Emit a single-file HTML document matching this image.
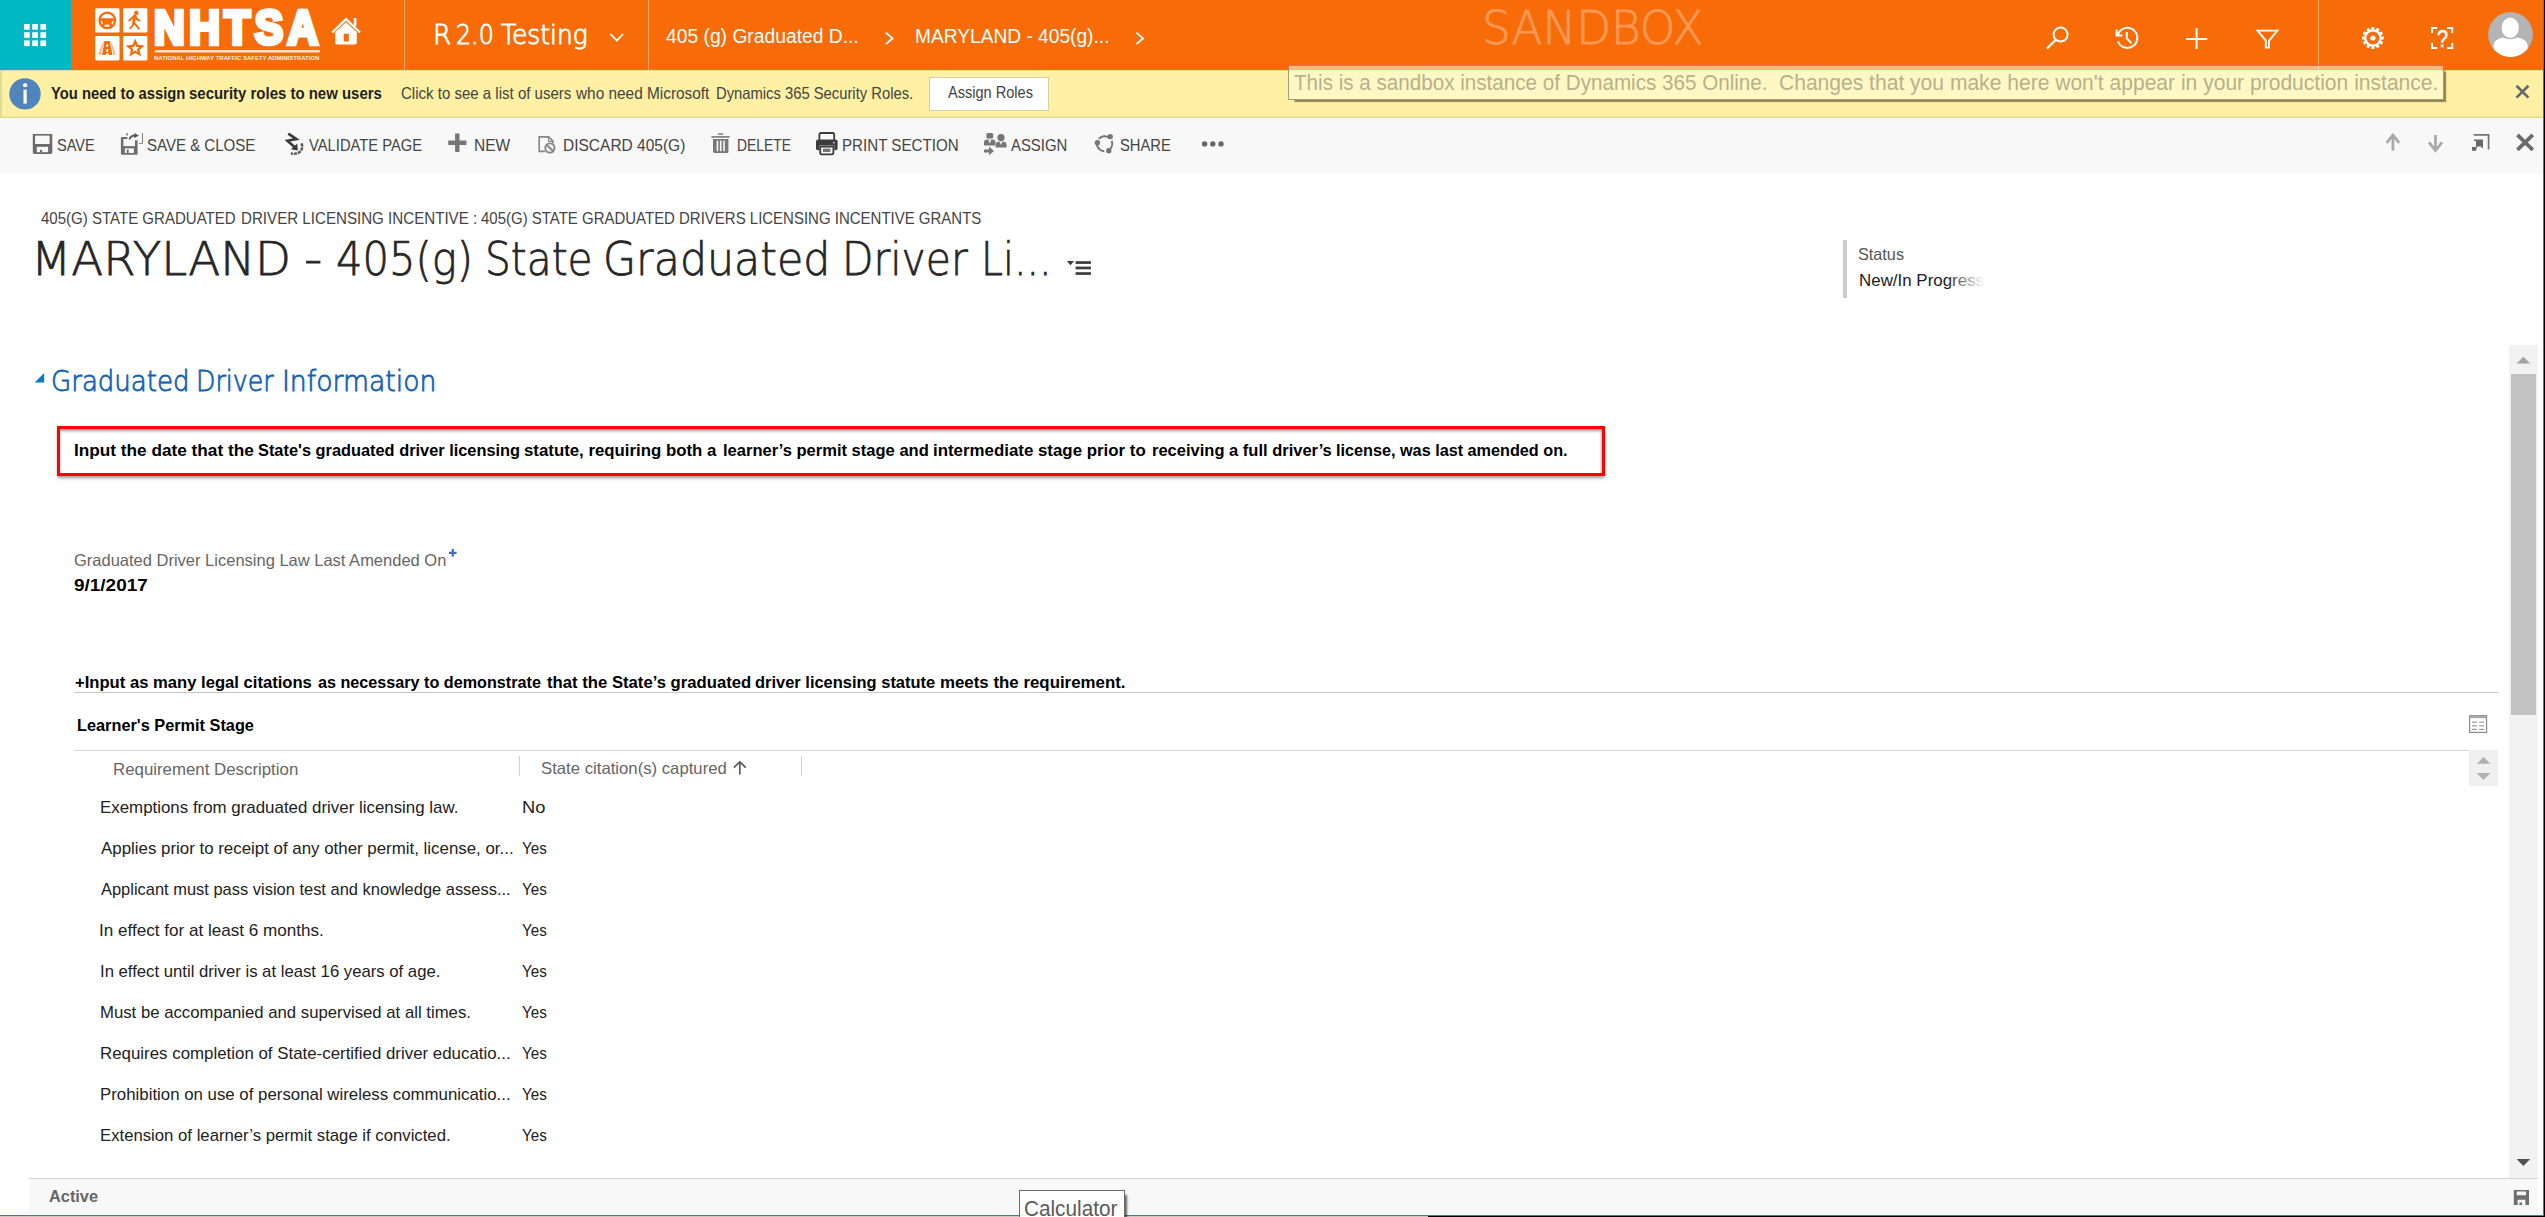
<!DOCTYPE html>
<html lang="en">
<head>
<meta charset="utf-8">
<title>405(g) State Graduated Driver Licensing Incentive: MARYLAND - Microsoft Dynamics 365</title>
<style>
html,body{margin:0;padding:0}
body{width:2545px;height:1217px;overflow:hidden;position:relative;background:#fff;font-family:"Liberation Sans",sans-serif}
.a{position:absolute}
.t{position:absolute;white-space:pre;line-height:0;transform-origin:0 50%;display:block}
svg{position:absolute;overflow:visible}
</style>
</head>
<body>
<!-- NAV BAR -->
<div class="a" id="nav" style="left:0;top:0;width:2543px;height:70px;background:#f76c09"></div>
<div class="a" id="teal" style="left:0;top:0;width:71px;height:70px;background:#00b7c3"></div>
<div class="a" style="left:404px;top:0;width:1px;height:70px;background:rgba(255,255,255,.38)"></div>
<div class="a" style="left:648px;top:0;width:1px;height:70px;background:rgba(255,255,255,.38)"></div>
<div class="a" style="left:2318px;top:0;width:1px;height:70px;background:rgba(255,255,255,.38)"></div>
<svg style="left:0px;top:0px" width="71" height="70" viewBox="0 0 71 70"><rect x="24.0" y="24.0" width="5.7" height="5.7" fill="#fff"/><rect x="24.0" y="32.2" width="5.7" height="5.7" fill="#fff"/><rect x="24.0" y="40.4" width="5.7" height="5.7" fill="#fff"/><rect x="32.2" y="24.0" width="5.7" height="5.7" fill="#fff"/><rect x="32.2" y="32.2" width="5.7" height="5.7" fill="#fff"/><rect x="32.2" y="40.4" width="5.7" height="5.7" fill="#fff"/><rect x="40.4" y="24.0" width="5.7" height="5.7" fill="#fff"/><rect x="40.4" y="32.2" width="5.7" height="5.7" fill="#fff"/><rect x="40.4" y="40.4" width="5.7" height="5.7" fill="#fff"/></svg>
<svg style="left:0px;top:0px" width="400" height="70" viewBox="0 0 400 70"><rect x="95.2" y="8.2" width="24.3" height="24.4" rx="1.3" fill="#fff"/><rect x="123.1" y="8.2" width="24.3" height="24.4" rx="1.3" fill="#fff"/><rect x="95.2" y="36" width="24.3" height="24.4" rx="1.3" fill="#fff"/><rect x="123.1" y="36" width="24.3" height="24.4" rx="1.3" fill="#fff"/><clipPath id="swc"><circle cx="107.3" cy="20.4" r="7.9"/></clipPath><g clip-path="url(#swc)"><path d="M98 18.3 H117 V21.2 L112.6 24.6 L111.4 30 H103.2 L102 24.6 L98 21.2 Z" fill="#f76c09"/></g><ellipse cx="107.1" cy="25.7" rx="2.7" ry="1.25" fill="#fff"/><ellipse cx="101.7" cy="22.6" rx="0.95" ry="2" fill="#fff" transform="rotate(-28 101.7 22.6)"/><ellipse cx="112.8" cy="22.6" rx="0.95" ry="2" fill="#fff" transform="rotate(28 112.8 22.6)"/><circle cx="107.3" cy="20.4" r="7.8" fill="none" stroke="#f76c09" stroke-width="2.2"/><circle cx="136.3" cy="12.9" r="2.2" fill="#f76c09"/><path d="M134.6 16 L133.6 23.4" fill="none" stroke="#f76c09" stroke-width="3" stroke-linecap="round"/><path d="M134.2 16 L129.2 20.6 M135.6 16.2 L137.3 19.5 L139.6 20.6 M133.6 23.4 L132.4 25.8 L130.2 28.2 M134 23 L135.6 24.6 L139 28.8" fill="none" stroke="#f76c09" stroke-width="1.9" stroke-linecap="round" stroke-linejoin="round"/><path d="M104.4 41 H109.7 L112.5 55 H108.9 V53.4 H105.8 V55 H102.1 Z" fill="#f76c09"/><rect x="106.3" y="44.3" width="1.9" height="2.6" fill="#fff"/><rect x="106.3" y="49.2" width="1.9" height="2.8" fill="#fff"/><path d="M103.2 41.4 L98.2 54.8 L100.6 54.8 L104 41.4 Z M110.8 41.4 L116 54.8 L113.8 54.8 L110.2 41.4 Z" fill="#f76c09" opacity=".55"/><polygon points="135.20,38.50 137.85,44.86 144.71,45.41 139.48,49.89 141.08,56.59 135.20,53.00 129.32,56.59 130.92,49.89 125.69,45.41 132.55,44.86" fill="#f76c09"/><polygon points="135.15,44.50 136.27,47.06 139.05,47.33 136.96,49.19 137.56,51.92 135.15,50.50 132.74,51.92 133.34,49.19 131.25,47.33 134.03,47.06" fill="#fff"/><rect x="154.7" y="50.1" width="165" height="2.4" fill="#fff" opacity=".85"/><path d="M332.2 32.5 L346 19.2 L360 32.5" fill="none" stroke="#fff" stroke-width="2.4" stroke-linejoin="miter"/><rect x="353.8" y="18" width="2.6" height="8" fill="#fff"/><path d="M335.2 32.2 L346 22.2 L356.8 32.2 V42.8 Q356.8 44.6 355 44.6 H337 Q335.2 44.6 335.2 42.8 Z M343.8 33.8 V41.4 H348.8 V33.8 Z" fill="#fff" fill-rule="evenodd"/></svg>
<svg style="left:0px;top:0px" width="1200" height="70" viewBox="0 0 1200 70"><path d="M610.5 34 L616.8 40.6 L623 34" fill="none" stroke="#fff" stroke-width="1.8"/><path d="M886 32.8 L892.5 38.4 L886 44" fill="none" stroke="#fff" stroke-width="1.8"/><path d="M1136.5 32.8 L1143 38.4 L1136.5 44" fill="none" stroke="#fff" stroke-width="1.8"/></svg>
<svg style="left:0px;top:0px" width="2545" height="70" viewBox="0 0 2545 70"><circle cx="2060.6" cy="34.6" r="7" fill="none" stroke="#fff" stroke-width="2"/><path d="M2055.6 40 L2046.8 48.6" stroke="#fff" stroke-width="2.2" fill="none"/><path d="M2117.6 35.5 A10 10 0 1 1 2118 41.5" fill="none" stroke="#fff" stroke-width="2"/><path d="M2116.6 29.4 V35.6 H2122.4" fill="none" stroke="#fff" stroke-width="2"/><path d="M2126.8 32 V38.4 L2131.4 43.2" fill="none" stroke="#fff" stroke-width="2"/><path d="M2186 38.9 H2207.2 M2196.6 28 V49" stroke="#fff" stroke-width="2" fill="none"/><path d="M2257.6 30.6 H2277.4 L2269 40.6 V47.6 H2265.8 V40.6 Z" fill="none" stroke="#fff" stroke-width="1.9" stroke-linejoin="miter"/><polygon points="2383.79,36.45 2383.79,39.55 2381.47,39.50 2381.07,40.99 2383.11,42.10 2381.56,44.79 2379.57,43.58 2378.48,44.67 2379.69,46.66 2377.00,48.21 2375.89,46.17 2374.40,46.57 2374.45,48.89 2371.35,48.89 2371.40,46.57 2369.91,46.17 2368.80,48.21 2366.11,46.66 2367.32,44.67 2366.23,43.58 2364.24,44.79 2362.69,42.10 2364.73,40.99 2364.33,39.50 2362.01,39.55 2362.01,36.45 2364.33,36.50 2364.73,35.01 2362.69,33.90 2364.24,31.21 2366.23,32.42 2367.32,31.33 2366.11,29.34 2368.80,27.79 2369.91,29.83 2371.40,29.43 2371.35,27.11 2374.45,27.11 2374.40,29.43 2375.89,29.83 2377.00,27.79 2379.69,29.34 2378.48,31.33 2379.57,32.42 2381.56,31.21 2383.11,33.90 2381.07,35.01 2381.47,36.50" fill="#fff"/><circle cx="2372.9" cy="38" r="6.5" fill="#f76c09"/><circle cx="2372.9" cy="38" r="2.6" fill="#fff"/><path d="M2437.2 27.9 H2432 V33.1 M2447.0 27.9 H2452.2 V33.1 M2437.2 47.9 H2432 V42.699999999999996 M2447.0 47.9 H2452.2 V42.699999999999996 " fill="none" stroke="#fff" stroke-width="2" stroke-linejoin="miter" stroke-linecap="butt"/><clipPath id="avc"><circle cx="2510.5" cy="34.5" r="22.4"/></clipPath><circle cx="2510.5" cy="34.5" r="22.4" fill="#b4b4b4"/><g clip-path="url(#avc)"><ellipse cx="2510.2" cy="27.8" rx="8.6" ry="10.2" fill="#fff"/><path d="M2493.5 60 V46 Q2493.5 39.5 2503 37.6 Q2510.2 41 2517.4 37.6 Q2527.6 39.5 2527.6 46 V60 Z" fill="#fff"/></g></svg>
<!-- YELLOW BAR -->
<div class="a" id="ybar" style="left:0;top:70px;width:2543px;height:47px;background:#fff0a3;border-bottom:1px solid #d9da92;box-sizing:content-box"></div>
<div class="a" style="left:0;top:70px;width:2543px;height:1px;background:#dcdd97"></div>
<div class="a" style="left:0;top:116px;width:2543px;height:1px;background:rgba(217,218,146,.35)"></div>
<div class="a" style="left:0;top:70px;width:2px;height:47px;background:#dcdd98"></div>
<div class="a" id="assign" style="left:929px;top:77px;width:118px;height:32px;background:#fff;border:1px solid #d4d0a4"></div>
<svg style="left:0px;top:0px" width="2545" height="118" viewBox="0 0 2545 118"><circle cx="25" cy="93.9" r="15.7" fill="#5085bb"/><rect x="23.5" y="89.6" width="3.2" height="14" fill="#fff"/><circle cx="25.1" cy="85.2" r="2.1" fill="#fff"/><path d="M2516.5 85.8 L2528.4 97.6 M2528.4 85.8 L2516.5 97.6" stroke="#65686c" stroke-width="2.7" fill="none"/></svg>
<!-- COMMAND BAR -->
<div class="a" id="cbar" style="left:0;top:118px;width:2543px;height:56px;background:#f8f8f8"></div>
<svg style="left:0px;top:0px" width="2545" height="180" viewBox="0 0 2545 180"><path d="M33.6 133.9 H51.5 Q52.3 133.9 52.3 134.7 V152.2 Q52.3 153.9 50.6 153.9 H34.5 Q32.8 153.9 32.8 152.2 V134.7 Q32.8 133.9 33.6 133.9 Z" fill="#6b6b6b"/><rect x="35.1" y="135.6" width="14.5" height="8.4" fill="#f8f8f8"/><rect x="36.8" y="146.8" width="11.3" height="5.4" fill="#f8f8f8"/><rect x="40" y="149.8" width="2.1" height="2.5" rx=".6" fill="#6b6b6b"/><rect x="120.9" y="137.1" width="16.7" height="17.7" rx="1.1" fill="#6e6e6e"/><rect x="123.4" y="139" width="11.6" height="7.1" fill="#f8f8f8"/><rect x="127.4" y="136.8" width="10.5" height="3.5" fill="#f8f8f8"/><rect x="124.9" y="148.4" width="9" height="4.6" fill="#f8f8f8"/><rect x="126.8" y="149.6" width="1.9" height="3.4" fill="#6e6e6e"/><path d="M129.5 139.4 Q130.6 135.6 135 135.5" fill="none" stroke="#585858" stroke-width="1.8"/><path d="M134.3 132.9 L138.9 135.5 L134.3 138.3 Z" fill="#585858"/><rect x="126.3" y="133.1" width="1.3" height="2.5" fill="#6a6a6a"/><path d="M142.5 133 V143.4 H139.1" fill="none" stroke="#707070" stroke-width="0.9"/><path d="M288.3 133.7 L296.4 139.1 L287.4 140.7 L295.6 148" fill="none" stroke="#3a3a3a" stroke-width="2.6" stroke-linejoin="miter"/><path d="M297.8 150.4 L291 149.3 L297.2 143.4 Z" fill="#3a3a3a"/><path d="M301.6 143.4 Q303.2 147.8 300.6 151.2 Q297 154.8 290.8 153.4" fill="none" stroke="#565656" stroke-width="2.5" stroke-dasharray="3.2 0.9"/><path d="M448.2 142.7 H466.4 M457.3 133.6 V151.9" stroke="#767676" stroke-width="4.4" fill="none"/><path d="M545 151.4 H539.2 V136.9 H548.6 L553 141.2 V143.5" fill="none" stroke="#858585" stroke-width="1.6"/><path d="M548.4 137 V141.4 H552.8" fill="none" stroke="#8a8a8a" stroke-width="1.1"/><circle cx="549.9" cy="148" r="4.6" fill="#f8f8f8" stroke="#858585" stroke-width="1.9"/><path d="M546.6 144.9 L553.2 151.2" stroke="#858585" stroke-width="1.9"/><rect x="717.8" y="133.4" width="5.4" height="1.4" fill="#777"/><rect x="711.4" y="136.1" width="18.2" height="1.6" fill="#777"/><path d="M713 138.9 H728.4 V151.6 Q728.4 153 727 153 H714.4 Q713 153 713 151.6 Z" fill="#777"/><rect x="716.6" y="140.6" width="1.7" height="10.6" fill="#f3f3f3"/><rect x="719.9" y="140.6" width="1.7" height="10.6" fill="#f3f3f3"/><rect x="723.2" y="140.6" width="1.7" height="10.6" fill="#f3f3f3"/><path d="M819.4 140 V134.6 Q819.4 133 821 133 H832.6 Q834.2 133 834.2 134.6 V140" fill="none" stroke="#3c3c3c" stroke-width="1.8"/><path d="M816 141.6 Q816 139.6 818 139.6 H835.6 Q837.6 139.6 837.6 141.6 V148.4 Q837.6 150.2 835.6 150.2 H834.4 V145.6 H819.2 V150.2 H818 Q816 150.2 816 148.4 Z" fill="#3c3c3c"/><path d="M820.2 146.6 H833.4 V152.8 Q833.4 154.4 831.8 154.4 H821.8 Q820.2 154.4 820.2 152.8 Z" fill="#f8f8f8" stroke="#3c3c3c" stroke-width="1.8"/><rect x="823" y="148.6" width="7.4" height="3.4" fill="#777"/><circle cx="833.8" cy="142.6" r="0.9" fill="#ddd"/><rect x="986.4" y="133" width="6.8" height="5.6" rx="1.6" fill="#767676"/><path d="M984 145.4 V142.4 Q984 139.4 987 139.4 H992.6 Q995.4 139.4 995.4 142.4 V145.4 Z" fill="#767676"/><path d="M988.2 139.4 L989.8 143.4 L991.4 139.4 Z" fill="#f8f8f8"/><circle cx="1001" cy="137.6" r="3.6" fill="#767676"/><path d="M995.6 147.4 V145 Q995.6 141.8 998.6 141.8 H1003.4 Q1006.6 141.8 1006.6 145 V147.4 Z" fill="#767676"/><path d="M999.6 141.8 L1001 145 L1002.4 141.8 Z" fill="#f8f8f8"/><path d="M984 149.4 H989 V146.6 L994 150.9 L989 155.2 V152.6 H984 Z" fill="#767676"/><path d="M1111.65 140.95 A7.6 7.6 0 0 1 1108.51 150.31 M1104.33 151.40 A7.6 7.6 0 0 1 1097.07 142.74 M1098.78 138.91 A7.6 7.6 0 0 1 1109.28 137.81" fill="none" stroke="#767676" stroke-width="2.1"/><circle cx="1110.2" cy="136.6" r="2.7" fill="#767676"/><circle cx="1097.4" cy="142.8" r="2.7" fill="#767676"/><circle cx="1108.8" cy="150.8" r="2.7" fill="#767676"/><circle cx="1204.6" cy="143.9" r="2.7" fill="#666"/><circle cx="1212.8" cy="143.9" r="2.7" fill="#666"/><circle cx="1221" cy="143.9" r="2.7" fill="#666"/><path d="M2392.9 150.4 V135 M2386.6 143 L2392.9 135 L2399.2 143" fill="none" stroke="#a9a9a9" stroke-width="2.8" stroke-linejoin="miter"/><path d="M2435.5 135 V150 M2429 142.4 L2435.5 150.6 L2442 142.4" fill="none" stroke="#a9a9a9" stroke-width="2.8" stroke-linejoin="miter"/><path d="M2473.6 134.8 H2488.6 V149.4" fill="none" stroke="#757575" stroke-width="1.7"/><path d="M2474 139.4 H2483 V148 H2481.4 V146.6 H2477 V148.4 H2476.2 V150.8 H2472 V147 H2476 V141 H2474 Z" fill="#6a6a6a"/><path d="M2517.4 134.8 L2532.8 149.8 M2532.8 134.8 L2517.4 149.8" stroke="#6b6b6b" stroke-width="3.7" fill="none"/></svg>
<!-- FORM -->
<div class="a" style="left:1843px;top:240px;width:4px;height:58px;background:#ccc"></div>
<div class="a" id="redbox" style="left:57px;top:426px;width:1542px;height:44px;border:3px solid #fd0000;box-shadow:-0.5px 2px 3px rgba(70,90,90,.6), inset -0.5px 2px 3px rgba(70,90,90,.6);background:#fff"></div>
<div class="a" style="left:74px;top:692px;width:2424px;height:1px;background:#c8c8c8"></div>
<div class="a" style="left:74px;top:750px;width:2395px;height:1px;background:#d6d6d6"></div>
<div class="a" style="left:519px;top:756px;width:1px;height:20px;background:#d0d0d0"></div>
<div class="a" style="left:801px;top:756px;width:1px;height:20px;background:#d0d0d0"></div>
<div class="a" style="left:2469px;top:750px;width:29px;height:36px;background:#f0f0f0"></div>
<!-- SCROLLBAR -->
<div class="a" style="left:2509px;top:345px;width:29px;height:833px;background:#f2f2f2"></div>
<div class="a" style="left:2511px;top:374px;width:25px;height:341px;background:#c2c2c2"></div>
<!-- FOOTER -->
<div class="a" style="left:29px;top:1178px;width:2509px;height:34px;background:#f8f8f8;border-top:1px solid #d4d4d4"></div>
<svg style="left:0px;top:0px" width="2545" height="1217" viewBox="0 0 2545 1217"><path d="M1066.9 261.1 H1074.1 L1070.5 265.3 Z" fill="#3c3c3c"/><rect x="1075.6" y="261.2" width="15.3" height="2.7" fill="#3c3c3c"/><rect x="1075.6" y="266.6" width="15.3" height="2.7" fill="#3c3c3c"/><rect x="1075.6" y="272.2" width="15.3" height="2.7" fill="#3c3c3c"/><path d="M44.2 373 V382.5 H34.7 Z" fill="#0a7aca"/><path d="M449 552.8 H456.6 M452.8 549 V556.6" stroke="#3d6ec6" stroke-width="2.3" fill="none"/><path d="M739.8 774.4 V762.4 M733.8 767.6 L739.8 761.8 L745.8 767.6" fill="none" stroke="#555" stroke-width="1.6"/><rect x="2469.6" y="715.6" width="17" height="16.8" fill="#fff" stroke="#8a8a8a" stroke-width="1.2"/><rect x="2469.6" y="715.6" width="17" height="2.6" fill="#aaa"/><rect x="2472" y="721.6" width="5" height="1.2" fill="#999"/><rect x="2479.2" y="721.6" width="5" height="1.2" fill="#999"/><rect x="2472" y="725.2" width="5" height="1.2" fill="#999"/><rect x="2479.2" y="725.2" width="5" height="1.2" fill="#999"/><rect x="2472" y="728.8" width="5" height="1.2" fill="#999"/><rect x="2479.2" y="728.8" width="5" height="1.2" fill="#999"/><path d="M2476.8 763.8 L2483.5 757 L2490.3 763.8 Z" fill="#b0b0b0"/><path d="M2476.8 773 L2483.5 780 L2490.3 773 Z" fill="#b0b0b0"/><path d="M2516.6 363.6 L2523.4 356.8 L2530.2 363.6 Z" fill="#a3a3a3"/><path d="M2516.6 1159 L2523.4 1166 L2530.2 1159 Z" fill="#505050"/><path d="M2513.8 1190 H2529 V1205 H2513.8 Z M2516.8 1191.4 V1195.2 H2526 V1191.4 Z M2517.6 1199.8 V1205 H2519.4 V1202.6 H2522 V1205 H2525.4 V1199.8 Z" fill="#6e6e6e" fill-rule="evenodd"/></svg>
<!-- window edges -->
<div class="a" style="left:0;top:1213px;width:2543px;height:2px;background:#fff"></div>
<div class="a" style="left:0;top:1215px;width:2545px;height:1px;background:#1c83d9"></div>
<div class="a" style="left:0;top:1216px;width:1428px;height:1px;background:#cfc6bd"></div>
<div class="a" style="left:1428px;top:1216px;width:1117px;height:1px;background:#000"></div>
<div class="a" style="left:2543px;top:0;width:1px;height:1216px;background:#1c83d9"></div>
<div class="a" style="left:2544px;top:0;width:1px;height:1217px;background:#000"></div>
<!-- Calculator tip -->
<div class="a" style="left:1019px;top:1190px;width:104px;height:30px;background:#fff;border:1px solid #6a6a6a;box-shadow:3px 4px 2px -1px rgba(0,0,0,.6)"></div>
<!-- sandbox tooltip -->
<div class="a" id="tipbox" style="left:1288px;top:65px;width:1154px;height:33px;background:rgba(255,255,228,.52);border:1px solid rgba(125,115,85,.7);box-shadow:4.3px 4.3px 1px -2.2px rgba(112,106,60,.8)"></div>
<span class="t" id="logo" style="left:154.45px;top:27.98px;font-size:47.4px;font-weight:700;color:#fff;font-family:'Liberation Sans', sans-serif;transform:scale(0.8966,1.0);-webkit-text-stroke:4.4px #fff;paint-order:stroke fill;letter-spacing:5px;">NHTSA</span>
<span class="t" id="logo2" style="left:154.40px;top:58.34px;font-size:9px;font-weight:700;color:rgba(255,255,255,.9);font-family:'Liberation Sans', sans-serif;transform:scale(0.6655,0.5);">NATIONAL HIGHWAY TRAFFIC SAFETY ADMINISTRATION</span>
<span class="t" id="help" style="left:2436.84px;top:38.53px;font-size:23px;font-weight:400;color:#fff;font-family:'Liberation Sans', sans-serif;transform:scale(0.8625,1.0);-webkit-text-stroke:0.5px #fff;">?</span>
<span class="t" id="nav10" style="left:432.63px;top:34.78px;font-size:27.2px;font-weight:200;color:#fff;font-family:'DejaVu Sans', 'Liberation Sans', sans-serif;transform:scale(0.9597,1.0);-webkit-text-stroke:1px #fff;">R</span>
<span class="t" id="nav11" style="left:455.77px;top:34.78px;font-size:27.2px;font-weight:200;color:#fff;font-family:'DejaVu Sans', 'Liberation Sans', sans-serif;transform:scale(0.8733,1.0);-webkit-text-stroke:1px #fff;">2.0</span>
<span class="t" id="nav12" style="left:501.15px;top:34.78px;font-size:27.2px;font-weight:200;color:#fff;font-family:'DejaVu Sans', 'Liberation Sans', sans-serif;transform:scale(0.9168,1.0);-webkit-text-stroke:1px #fff;">Testing</span>
<span class="t" id="nav2" style="left:666.14px;top:36.07px;font-size:20px;font-weight:400;color:#fff;font-family:'Liberation Sans', sans-serif;transform:scale(0.9631,1.0);">405 (g) Graduated D...</span>
<span class="t" id="nav3" style="left:915.03px;top:36.07px;font-size:20px;font-weight:400;color:#fff;font-family:'Liberation Sans', sans-serif;transform:scale(0.9578,1.0);">MARYLAND - 405(g)...</span>
<span class="t" id="sand" style="left:1482.12px;top:28.11px;font-size:47px;font-weight:200;color:#fa9854;font-family:'DejaVu Sans', 'Liberation Sans', sans-serif;transform:scale(0.9615,1.0);-webkit-text-stroke:0.9px #fa9854;">SANDBOX</span>
<span class="t" id="y10" style="left:50.66px;top:93.28px;font-size:16.5px;font-weight:700;color:#1f1f1f;font-family:'Liberation Sans', sans-serif;transform:scale(0.8952,1.0);">You need to assign</span>
<span class="t" id="y11" style="left:189.15px;top:93.28px;font-size:16.5px;font-weight:700;color:#1f1f1f;font-family:'Liberation Sans', sans-serif;transform:scale(0.9066,1.0);">security roles to new users</span>
<span class="t" id="y20" style="left:400.75px;top:93.28px;font-size:16.5px;font-weight:400;color:#444;font-family:'Liberation Sans', sans-serif;transform:scale(0.9107,1.0);">Click to see a list of users</span>
<span class="t" id="y21" style="left:575.62px;top:93.28px;font-size:16.5px;font-weight:400;color:#444;font-family:'Liberation Sans', sans-serif;transform:scale(0.9320,1.0);">who need Microsoft</span>
<span class="t" id="y22" style="left:715.76px;top:93.28px;font-size:16.5px;font-weight:400;color:#444;font-family:'Liberation Sans', sans-serif;transform:scale(0.8958,1.0);">Dynamics 365 Security Roles.</span>
<span class="t" id="y3" style="left:947.96px;top:92.48px;font-size:16.5px;font-weight:400;color:#444;font-family:'Liberation Sans', sans-serif;transform:scale(0.8821,1.0);">Assign Roles</span>
<span class="t" id="tip" style="left:1294.17px;top:83.45px;font-size:21.5px;font-weight:400;color:#b6b18a;font-family:'Liberation Sans', sans-serif;transform:scale(0.9594,1.0);">This is a sandbox instance of Dynamics 365 Online.</span>
<span class="t" id="tip2" style="left:1779.05px;top:83.45px;font-size:21.5px;font-weight:400;color:#b6b18a;font-family:'Liberation Sans', sans-serif;transform:scale(0.9792,1.0);">Changes that you make here won't appear in your production instance.</span>
<span class="t" id="c1" style="left:57.18px;top:145.28px;font-size:16.5px;font-weight:400;color:#444;font-family:'Liberation Sans', sans-serif;transform:scale(0.8804,1.0);">SAVE</span>
<span class="t" id="c2" style="left:146.95px;top:145.28px;font-size:16.5px;font-weight:400;color:#444;font-family:'Liberation Sans', sans-serif;transform:scale(0.9110,1.0);">SAVE &amp; CLOSE</span>
<span class="t" id="c3" style="left:309.06px;top:145.28px;font-size:16.5px;font-weight:400;color:#444;font-family:'Liberation Sans', sans-serif;transform:scale(0.8943,1.0);">VALIDATE PAGE</span>
<span class="t" id="c4" style="left:474.22px;top:145.28px;font-size:16.5px;font-weight:400;color:#444;font-family:'Liberation Sans', sans-serif;transform:scale(0.9400,1.0);">NEW</span>
<span class="t" id="c5" style="left:562.62px;top:145.28px;font-size:16.5px;font-weight:400;color:#444;font-family:'Liberation Sans', sans-serif;transform:scale(0.9396,1.0);">DISCARD 405(G)</span>
<span class="t" id="c6" style="left:736.81px;top:145.28px;font-size:16.5px;font-weight:400;color:#444;font-family:'Liberation Sans', sans-serif;transform:scale(0.8405,1.0);">DELETE</span>
<span class="t" id="c7" style="left:842.44px;top:145.28px;font-size:16.5px;font-weight:400;color:#444;font-family:'Liberation Sans', sans-serif;transform:scale(0.9174,1.0);">PRINT SECTION</span>
<span class="t" id="c8" style="left:1011.34px;top:145.28px;font-size:16.5px;font-weight:400;color:#444;font-family:'Liberation Sans', sans-serif;transform:scale(0.9019,1.0);">ASSIGN</span>
<span class="t" id="c9" style="left:1119.87px;top:145.28px;font-size:16.5px;font-weight:400;color:#444;font-family:'Liberation Sans', sans-serif;transform:scale(0.8944,1.0);">SHARE</span>
<span class="t" id="bc0" style="left:40.64px;top:218.48px;font-size:16.5px;font-weight:400;color:#444;font-family:'Liberation Sans', sans-serif;transform:scale(0.9112,1.0);">405(G) STATE GRADUATED</span>
<span class="t" id="bc1" style="left:240.64px;top:218.48px;font-size:16.5px;font-weight:400;color:#444;font-family:'Liberation Sans', sans-serif;transform:scale(0.9167,1.0);">DRIVER LICENSING INCENTIVE :</span>
<span class="t" id="bc2" style="left:480.95px;top:218.48px;font-size:16.5px;font-weight:400;color:#444;font-family:'Liberation Sans', sans-serif;transform:scale(0.9079,1.0);">405(G) STATE GRADUATED</span>
<span class="t" id="bc3" style="left:679.35px;top:218.48px;font-size:16.5px;font-weight:400;color:#444;font-family:'Liberation Sans', sans-serif;transform:scale(0.9084,1.0);">DRIVERS LICENSING INCENTIVE GRANTS</span>
<span class="t" id="ti0" style="left:30.76px;top:259.31px;font-size:47px;font-weight:200;color:#262626;font-family:'DejaVu Sans', 'Liberation Sans', sans-serif;transform:scale(0.9932,1.0);-webkit-text-stroke:0.75px #262626;">MARYLAND</span>
<span class="t" id="ti1" style="left:303.83px;top:259.31px;font-size:47px;font-weight:200;color:#262626;font-family:'DejaVu Sans', 'Liberation Sans', sans-serif;transform:scale(1.0901,1.0);-webkit-text-stroke:0.75px #262626;">-</span>
<span class="t" id="ti2" style="left:336.01px;top:259.31px;font-size:47px;font-weight:200;color:#262626;font-family:'DejaVu Sans', 'Liberation Sans', sans-serif;transform:scale(0.8871,1.0);-webkit-text-stroke:0.75px #262626;">405(g)</span>
<span class="t" id="ti3" style="left:484.73px;top:259.31px;font-size:47px;font-weight:200;color:#262626;font-family:'DejaVu Sans', 'Liberation Sans', sans-serif;transform:scale(0.8646,1.0);-webkit-text-stroke:0.75px #262626;">State</span>
<span class="t" id="ti4" style="left:602.54px;top:259.31px;font-size:47px;font-weight:200;color:#262626;font-family:'DejaVu Sans', 'Liberation Sans', sans-serif;transform:scale(0.9093,1.0);-webkit-text-stroke:0.75px #262626;">Graduated</span>
<span class="t" id="ti5" style="left:841.54px;top:259.31px;font-size:47px;font-weight:200;color:#262626;font-family:'DejaVu Sans', 'Liberation Sans', sans-serif;transform:scale(0.8689,1.0);-webkit-text-stroke:0.75px #262626;">Driver</span>
<span class="t" id="ti6" style="left:980.82px;top:259.31px;font-size:47px;font-weight:200;color:#262626;font-family:'DejaVu Sans', 'Liberation Sans', sans-serif;transform:scale(0.8394,1.0);-webkit-text-stroke:0.75px #262626;">Li...</span>
<span class="t" id="st1" style="left:1858.19px;top:254.28px;font-size:16.5px;font-weight:400;color:#555;font-family:'Liberation Sans', sans-serif;transform:scale(0.9835,1.0);">Status</span>
<span class="t" id="st2" style="left:1858.65px;top:281.18px;font-size:16.8px;font-weight:400;color:#1a1a1a;font-family:'Liberation Sans', sans-serif;transform:scale(1.0081,1.0);">New/In Progress</span>
<span class="t" id="sec0" style="left:50.99px;top:381.02px;font-size:28.8px;font-weight:200;color:#1462b8;font-family:'DejaVu Sans', 'Liberation Sans', sans-serif;transform:scale(0.9041,1.0);-webkit-text-stroke:0.85px #1462b8;">Graduated</span>
<span class="t" id="sec1" style="left:195.83px;top:381.02px;font-size:28.8px;font-weight:200;color:#1462b8;font-family:'DejaVu Sans', 'Liberation Sans', sans-serif;transform:scale(0.8756,1.0);-webkit-text-stroke:0.85px #1462b8;">Driver</span>
<span class="t" id="sec2" style="left:282.04px;top:381.02px;font-size:28.8px;font-weight:200;color:#1462b8;font-family:'DejaVu Sans', 'Liberation Sans', sans-serif;transform:scale(0.9265,1.0);-webkit-text-stroke:0.85px #1462b8;">Information</span>
<span class="t" id="red0" style="left:74.04px;top:450.28px;font-size:16.5px;font-weight:700;color:#000;font-family:'Liberation Sans', sans-serif;transform:scale(1.0431,1.0);">Input the date that the</span>
<span class="t" id="red1" style="left:258.18px;top:450.28px;font-size:16.5px;font-weight:700;color:#000;font-family:'Liberation Sans', sans-serif;transform:scale(0.9914,1.0);">State's graduated driver licensing</span>
<span class="t" id="red2" style="left:524.26px;top:450.28px;font-size:16.5px;font-weight:700;color:#000;font-family:'Liberation Sans', sans-serif;transform:scale(1.0184,1.0);">statute, requiring both a</span>
<span class="t" id="red3" style="left:723.47px;top:450.28px;font-size:16.5px;font-weight:700;color:#000;font-family:'Liberation Sans', sans-serif;transform:scale(1.0017,1.0);">learner’s permit stage and</span>
<span class="t" id="red4" style="left:933.26px;top:450.28px;font-size:16.5px;font-weight:700;color:#000;font-family:'Liberation Sans', sans-serif;transform:scale(1.0221,1.0);">intermediate stage prior to</span>
<span class="t" id="red5" style="left:1151.57px;top:450.28px;font-size:16.5px;font-weight:700;color:#000;font-family:'Liberation Sans', sans-serif;transform:scale(1.0003,1.0);">receiving a full driver’s</span>
<span class="t" id="red6" style="left:1336.39px;top:450.28px;font-size:16.5px;font-weight:700;color:#000;font-family:'Liberation Sans', sans-serif;transform:scale(0.9827,1.0);">license, was last amended on.</span>
<span class="t" id="f1" style="left:73.67px;top:560.28px;font-size:16.5px;font-weight:400;color:#666;font-family:'Liberation Sans', sans-serif;transform:scale(0.9999,1.0);">Graduated Driver Licensing Law Last Amended On</span>
<span class="t" id="f2" style="left:73.56px;top:585.28px;font-size:16.5px;font-weight:700;color:#000;font-family:'Liberation Sans', sans-serif;transform:scale(1.1485,1.0);">9/1/2017</span>
<span class="t" id="in0" style="left:75.37px;top:682.38px;font-size:16.5px;font-weight:700;color:#000;font-family:'Liberation Sans', sans-serif;transform:scale(1.0071,1.0);">+Input as many legal citations</span>
<span class="t" id="in1" style="left:317.99px;top:682.38px;font-size:16.5px;font-weight:700;color:#000;font-family:'Liberation Sans', sans-serif;transform:scale(0.9799,1.0);">as necessary to demonstrate</span>
<span class="t" id="in2" style="left:546.56px;top:682.38px;font-size:16.5px;font-weight:700;color:#000;font-family:'Liberation Sans', sans-serif;transform:scale(1.0112,1.0);">that the State’s graduated</span>
<span class="t" id="in3" style="left:754.78px;top:682.38px;font-size:16.5px;font-weight:700;color:#000;font-family:'Liberation Sans', sans-serif;transform:scale(0.9975,1.0);">driver licensing statute</span>
<span class="t" id="in4" style="left:940.25px;top:682.38px;font-size:16.5px;font-weight:700;color:#000;font-family:'Liberation Sans', sans-serif;transform:scale(1.0219,1.0);">meets the requirement.</span>
<span class="t" id="lp" style="left:76.58px;top:725.28px;font-size:16.5px;font-weight:700;color:#000;font-family:'Liberation Sans', sans-serif;transform:scale(0.9879,1.0);">Learner's Permit Stage</span>
<span class="t" id="h1" style="left:112.96px;top:769.18px;font-size:16.5px;font-weight:400;color:#666;font-family:'Liberation Sans', sans-serif;transform:scale(1.0203,1.0);">Requirement Description</span>
<span class="t" id="h2" style="left:540.76px;top:768.28px;font-size:16.5px;font-weight:400;color:#666;font-family:'Liberation Sans', sans-serif;transform:scale(1.0130,1.0);">State citation(s) captured</span>
<span class="t" id="r0" style="left:99.86px;top:807.85px;font-size:16.6px;font-weight:400;color:#222;font-family:'Liberation Sans', sans-serif;transform:scale(1.0173,1.0);">Exemptions from graduated driver licensing law.</span>
<span class="t" id="v0" style="left:521.79px;top:807.85px;font-size:16.6px;font-weight:400;color:#222;font-family:'Liberation Sans', sans-serif;transform:scale(1.1030,1.0);">No</span>
<span class="t" id="r1" style="left:100.85px;top:848.85px;font-size:16.6px;font-weight:400;color:#222;font-family:'Liberation Sans', sans-serif;transform:scale(1.0167,1.0);">Applies prior to receipt of any other permit, license, or...</span>
<span class="t" id="v1" style="left:521.94px;top:848.85px;font-size:16.6px;font-weight:400;color:#222;font-family:'Liberation Sans', sans-serif;transform:scale(0.9160,1.0);">Yes</span>
<span class="t" id="r2" style="left:100.88px;top:889.85px;font-size:16.6px;font-weight:400;color:#222;font-family:'Liberation Sans', sans-serif;transform:scale(0.9914,1.0);">Applicant must pass vision test and knowledge assess...</span>
<span class="t" id="v2" style="left:521.94px;top:889.85px;font-size:16.6px;font-weight:400;color:#222;font-family:'Liberation Sans', sans-serif;transform:scale(0.9160,1.0);">Yes</span>
<span class="t" id="r3" style="left:98.84px;top:930.85px;font-size:16.6px;font-weight:400;color:#222;font-family:'Liberation Sans', sans-serif;transform:scale(1.0294,1.0);">In effect for at least 6 months.</span>
<span class="t" id="v3" style="left:521.94px;top:930.85px;font-size:16.6px;font-weight:400;color:#222;font-family:'Liberation Sans', sans-serif;transform:scale(0.9160,1.0);">Yes</span>
<span class="t" id="r4" style="left:99.86px;top:971.85px;font-size:16.6px;font-weight:400;color:#222;font-family:'Liberation Sans', sans-serif;transform:scale(1.0064,1.0);">In effect until driver is at least 16 years of age.</span>
<span class="t" id="v4" style="left:521.94px;top:971.85px;font-size:16.6px;font-weight:400;color:#222;font-family:'Liberation Sans', sans-serif;transform:scale(0.9160,1.0);">Yes</span>
<span class="t" id="r5" style="left:99.86px;top:1012.85px;font-size:16.6px;font-weight:400;color:#222;font-family:'Liberation Sans', sans-serif;transform:scale(1.0078,1.0);">Must be accompanied and supervised at all times.</span>
<span class="t" id="v5" style="left:521.94px;top:1012.85px;font-size:16.6px;font-weight:400;color:#222;font-family:'Liberation Sans', sans-serif;transform:scale(0.9160,1.0);">Yes</span>
<span class="t" id="r6" style="left:99.86px;top:1053.85px;font-size:16.6px;font-weight:400;color:#222;font-family:'Liberation Sans', sans-serif;transform:scale(1.0166,1.0);">Requires completion of State-certified driver educatio...</span>
<span class="t" id="v6" style="left:521.94px;top:1053.85px;font-size:16.6px;font-weight:400;color:#222;font-family:'Liberation Sans', sans-serif;transform:scale(0.9160,1.0);">Yes</span>
<span class="t" id="r7" style="left:99.86px;top:1094.85px;font-size:16.6px;font-weight:400;color:#222;font-family:'Liberation Sans', sans-serif;transform:scale(1.0140,1.0);">Prohibition on use of personal wireless communicatio...</span>
<span class="t" id="v7" style="left:521.94px;top:1094.85px;font-size:16.6px;font-weight:400;color:#222;font-family:'Liberation Sans', sans-serif;transform:scale(0.9160,1.0);">Yes</span>
<span class="t" id="r8" style="left:99.86px;top:1135.85px;font-size:16.6px;font-weight:400;color:#222;font-family:'Liberation Sans', sans-serif;transform:scale(1.0074,1.0);">Extension of learner’s permit stage if convicted.</span>
<span class="t" id="v8" style="left:521.94px;top:1135.85px;font-size:16.6px;font-weight:400;color:#222;font-family:'Liberation Sans', sans-serif;transform:scale(0.9160,1.0);">Yes</span>
<span class="t" id="act" style="left:48.98px;top:1196.75px;font-size:16.6px;font-weight:700;color:#666;font-family:'Liberation Sans', sans-serif;transform:scale(0.9849,1.0);">Active</span>
<span class="t" id="calc" style="left:1024.46px;top:1208.55px;font-size:21.5px;font-weight:400;color:#5a5a5a;font-family:'Liberation Sans', sans-serif;transform:scale(0.9648,1.0);">Calculator</span>
<div class="a" style="left:1946px;top:270px;width:42px;height:26px;background:linear-gradient(90deg,rgba(255,255,255,0),rgba(255,255,255,.93) 85%)"></div>
</body>
</html>
